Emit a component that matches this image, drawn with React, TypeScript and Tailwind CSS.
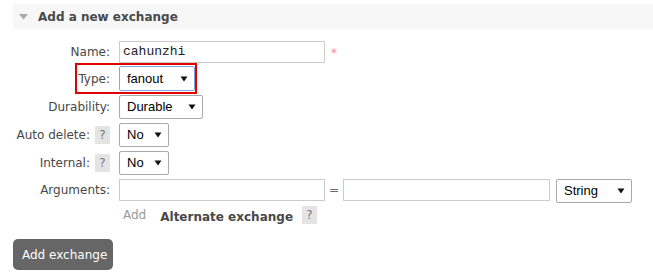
const labelClass = 'flex w-[97px] shrink-0 items-center justify-end gap-[5px] text-right'

function Help() {
  return (
    <span className="flex h-[18px] w-[15px] items-center justify-center bg-[#e4e4e4] text-[12px] text-[#777]">?</span>
  )
}

function Arrow() {
  return (
    <svg width="8" height="6" viewBox="0 0 8 6" className="shrink-0">
      <path d="M0.5 0.5 L7.5 0.5 L4 5.5 Z" fill="#111" />
    </svg>
  )
}

function FakeSelect({ value, width, height = 24, focused }: { value: string; width: number; height?: number; focused?: boolean }) {
  return (
    <div
      className={
        'flex items-center justify-between rounded-[2px] border bg-white pl-[7px] pr-[6px] font-["Liberation_Sans"] text-[13px] text-black ' +
        (focused ? 'border-[#7da7e3]' : 'border-[#a9a9a9]')
      }
      style={{ width, height }}
    >
      <span>{value}</span>
      <Arrow />
    </div>
  )
}

export default function App() {
  return (
    <div className="min-h-[278px] bg-white pl-[13px] pt-[4px] font-['DejaVu_Sans',sans-serif] text-[12px] text-[#484848]">
      <div className="flex h-[25px] items-center bg-[#f7f7f7]">
        <svg width="9" height="6" viewBox="0 0 9 6" className="ml-[6px] mr-[10px]">
          <path d="M0 0 L9 0 L4.5 5.5 Z" fill="#aaa" />
        </svg>
        <h2 className="font-bold text-[12px] text-[#484848]">Add a new exchange</h2>
      </div>

      <div className="mt-[12px] flex flex-col">
        <div className="flex h-[22px] items-center">
          <label className={labelClass}>Name:</label>
          <div className="ml-[9px] flex h-[22px] w-[206px] items-center border border-[#ccc] pl-[3px] font-['Liberation_Mono',monospace] text-[13px] text-[#222]">
            cahunzhi
          </div>
          <span className="ml-[6px] self-start pt-[3px] text-[12px] text-[#f88]">*</span>
        </div>

        <div className="relative mt-[3px] flex h-[25px] items-center">
          <label className={labelClass}>Type:</label>
          <div className="ml-[9px]">
            <FakeSelect value="fanout" width={76} height={25} focused />
          </div>
          <div className="pointer-events-none absolute left-[62px] top-[-3px] h-[31px] w-[122px] border-2 border-[#e00000]" />
        </div>

        <div className="mt-[4px] flex h-[24px] items-center">
          <label className={labelClass}>Durability:</label>
          <div className="ml-[9px]">
            <FakeSelect value="Durable" width={84} />
          </div>
        </div>

        <div className="mt-[4px] flex h-[24px] items-center">
          <label className={labelClass}>
            Auto delete: <Help />
          </label>
          <div className="ml-[9px]">
            <FakeSelect value="No" width={50} />
          </div>
        </div>

        <div className="mt-[4px] flex h-[24px] items-center">
          <label className={labelClass}>
            Internal: <Help />
          </label>
          <div className="ml-[9px]">
            <FakeSelect value="No" width={50} />
          </div>
        </div>

        <div className="mt-[4px] flex items-start">
          <label className={labelClass + ' h-[22px]'}>Arguments:</label>
          <div className="ml-[9px] h-[22px] w-[206px] border border-[#ccc]" />
          <span className="w-[18px] text-center leading-[22px] text-[#666]">=</span>
          <div className="h-[22px] w-[207px] border border-[#ccc]" />
          <div className="ml-[6px]">
            <FakeSelect value="String" width={76} />
          </div>
        </div>

        <div className="mt-[2px] flex h-[19px] items-start pl-[110px]">
          <span className="pt-[1px] text-[#999]">Add</span>
          <span className="ml-[14px] pt-[3px] font-bold text-[#484848]">Alternate exchange</span>
          <span className="ml-[9px] pt-[1px]">
            <Help />
          </span>
        </div>
      </div>

      <button
        type="button"
        className="mt-[15px] flex h-[31px] w-[100px] items-center rounded-[5px] bg-[#666] pl-[9px] text-[12px] text-white"
      >
        Add exchange
      </button>
    </div>
  )
}
